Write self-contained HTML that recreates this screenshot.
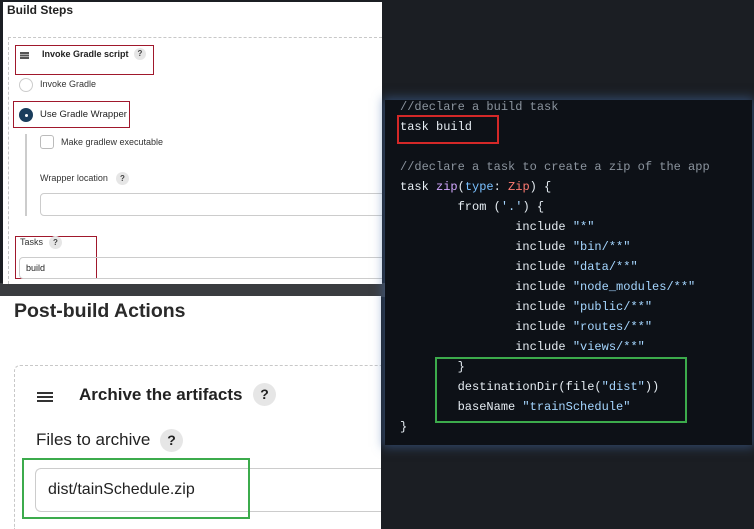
<!DOCTYPE html>
<html><head><meta charset="utf-8"><style>
*{margin:0;padding:0;box-sizing:border-box}
html,body{width:754px;height:529px;overflow:hidden}
body{background:#1b1e23;position:relative;font-family:"Liberation Sans",sans-serif}
.a{position:absolute}
.p{position:absolute;overflow:hidden;background:#fff}
.q{position:absolute;border-radius:50%;background:#e6e6e6;color:#444;font-weight:bold;text-align:center}
.code{font-family:"Liberation Mono",monospace;font-size:12px;color:#e6edf3;white-space:pre;line-height:20px}
.cm{color:#8b949e}.s{color:#a5d6ff}.k{color:#d2a8ff}.t{color:#79c0ff}.r{color:#ff7b72}
</style></head><body>
<div class="a" style="left:0;top:283px;width:385px;height:14px;background:#3a3c40"></div>
<!-- top panel -->
<div class="p" style="left:3px;top:2px;width:379px;height:282px">
<div class="a" style="left:4px;top:1px;font-size:12px;font-weight:bold;color:#222">Build Steps</div>
<div class="a" style="left:5px;top:35px;width:374px;height:247px;border:1px dashed #c8c8c8;border-right:none;border-bottom:none"></div>
<div class="a" style="left:12px;top:43px;width:139px;height:30px;border:1.5px solid #a0182c"></div>
<div class="a" style="left:17px;top:50px;width:9px;height:1.5px;background:#555;box-shadow:0 2.5px 0 #555,0 5px 0 #555"></div>
<div class="a" style="left:39px;top:47px;font-size:9px;font-weight:bold;color:#222">Invoke Gradle script</div>
<div class="q" style="left:131px;top:46px;width:12px;height:12px;font-size:8px;line-height:12px">?</div>
<div class="a" style="left:16px;top:76px;width:14px;height:14px;border:1px solid #ccc;border-radius:50%"></div>
<div class="a" style="left:37px;top:77px;font-size:9px;color:#333">Invoke Gradle</div>
<div class="a" style="left:10px;top:99px;width:117px;height:27px;border:1.5px solid #a0182c"></div>
<div class="a" style="left:16px;top:106px;width:14px;height:14px;background:#1a3d5c;border-radius:50%"></div>
<div class="a" style="left:21.5px;top:111.5px;width:3px;height:3px;background:#fff;border-radius:50%"></div>
<div class="a" style="left:37px;top:107px;font-size:9.5px;color:#222">Use Gradle Wrapper</div>
<div class="a" style="left:22px;top:132px;width:2px;height:82px;background:#ccc"></div>
<div class="a" style="left:37px;top:133px;width:14px;height:14px;border:1px solid #bbb;border-radius:3px"></div>
<div class="a" style="left:58px;top:135px;font-size:9px;color:#333">Make gradlew executable</div>
<div class="a" style="left:37px;top:171px;font-size:9px;color:#333">Wrapper location</div>
<div class="q" style="left:113px;top:170px;width:13px;height:13px;font-size:8px;line-height:13px">?</div>
<div class="a" style="left:37px;top:191px;width:345px;height:23px;border:1px solid #ccc;border-radius:4px"></div>
<div class="a" style="left:12px;top:234px;width:82px;height:43px;border:1.5px solid #a0182c"></div>
<div class="a" style="left:17px;top:235px;font-size:9px;color:#333">Tasks</div>
<div class="q" style="left:46px;top:234px;width:13px;height:13px;font-size:8px;line-height:13px">?</div>
<div class="a" style="left:16px;top:255px;width:366px;height:22px;border:1px solid #ccc;border-radius:4px"></div>
<div class="a" style="left:23px;top:261px;font-size:9px;color:#222">build</div>
</div>
<!-- bottom panel -->
<div class="p" style="left:0;top:296px;width:381px;height:233px">
<div class="a" style="left:14px;top:4px;font-size:19.5px;font-weight:bold;color:#2a2a2a">Post-build Actions</div>
<div class="a" style="left:14px;top:69px;width:367px;height:164px;border:1.5px dashed #c8c8c8;border-right:none;border-bottom:none;border-radius:6px 0 0 0"></div>
<div class="a" style="left:37px;top:96px;width:16px;height:2px;background:#333;box-shadow:0 4px 0 #333,0 8px 0 #333"></div>
<div class="a" style="left:79px;top:89px;font-size:17px;font-weight:bold;color:#222">Archive the artifacts</div>
<div class="q" style="left:253px;top:87px;width:23px;height:23px;font-size:14px;line-height:23px;color:#222">?</div>
<div class="a" style="left:36px;top:134px;font-size:17px;color:#222">Files to archive</div>
<div class="q" style="left:160px;top:133px;width:23px;height:23px;font-size:14px;line-height:23px;color:#222">?</div>
<div class="a" style="left:35px;top:172px;width:346px;height:44px;border:1.5px solid #ccc;border-right:none;border-radius:6px 0 0 6px"></div>
<div class="a" style="left:48px;top:185px;font-size:16px;color:#222">dist/tainSchedule.zip</div>
<div class="a" style="left:22px;top:162px;width:228px;height:61px;border:2px solid #3cab4c"></div>
</div>
<!-- code panel -->
<div class="a" style="left:385px;top:100px;width:367px;height:345px;background:#0d1117;box-shadow:0 0 10px 2px rgba(70,110,170,.55);overflow:hidden">
<div class="a code" style="left:15px;top:-3px"><span class="cm">//declare a build task</span>
task build

<span class="cm">//declare a task to create a zip of the app</span>
task <span class="k">zip</span>(<span class="t">type</span>: <span class="r">Zip</span>) {
        from (<span class="s">'.'</span>) {
                include <span class="s">"*"</span>
                include <span class="s">"bin/**"</span>
                include <span class="s">"data/**"</span>
                include <span class="s">"node_modules/**"</span>
                include <span class="s">"public/**"</span>
                include <span class="s">"routes/**"</span>
                include <span class="s">"views/**"</span>
        }
        destinationDir(file(<span class="s">"dist"</span>))
        baseName <span class="s">"trainSchedule"</span>
}</div>
<div class="a" style="left:12px;top:15px;width:102px;height:29px;border:2px solid #d42828"></div>
<div class="a" style="left:50px;top:257px;width:252px;height:66px;border:2px solid #3cab4c"></div>
</div>
</body></html>
